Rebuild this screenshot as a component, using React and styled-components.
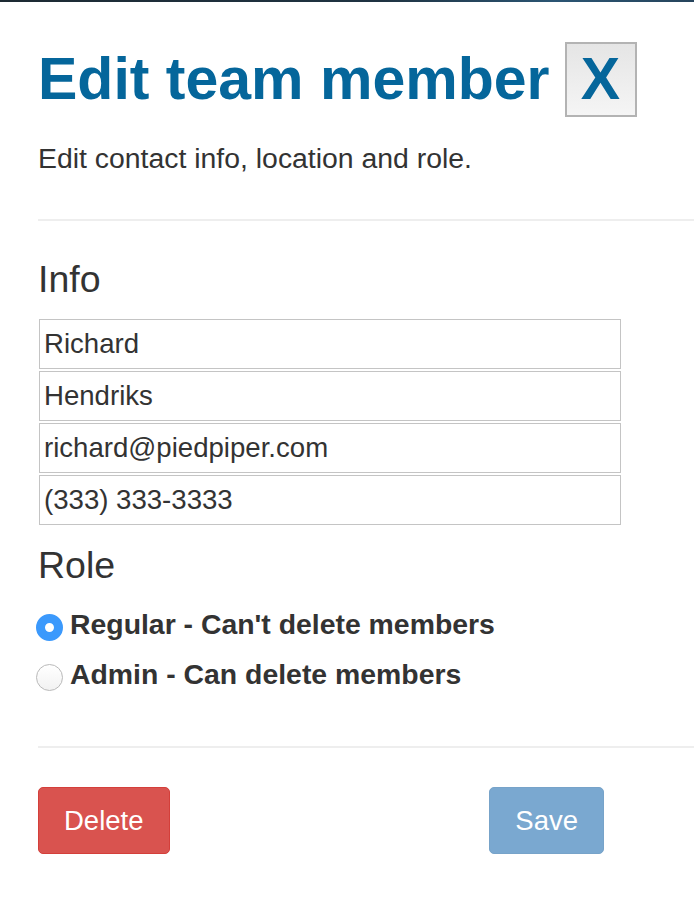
import React from "react";
import styled, { createGlobalStyle } from "styled-components";

const Global = createGlobalStyle`
  html, body { margin: 0; padding: 0; background: #fff; }
  body { font-family: "Liberation Sans", Arial, Helvetica, sans-serif; color: #333; }
  * { box-sizing: border-box; }
`;

const TopBar = styled.div`
  height: 2px;
  background: linear-gradient(to right, #1d2a33 0%, #1f3342 55%, #2b5573 80%, #26445c 100%);
`;

const Page = styled.div`
  padding: 40px 0 40px 38px;
  overflow: hidden;
`;

const Header = styled.div`
  display: flex;
  align-items: center;
  gap: 15px;
  height: 75px;
`;

const Title = styled.h1`
  margin: 0;
  font-size: 59px;
  line-height: 65px;
  font-weight: 700;
  color: #05669b;
`;

const CloseButton = styled.button`
  width: 72px;
  height: 75px;
  padding: 0;
  border: 2px solid #b3b3b3;
  border-radius: 0;
  background: linear-gradient(to bottom, #e5e5e5, #f5f5f5);
  color: #05669b;
  font-family: inherit;
  font-size: 59px;
  font-weight: 700;
  line-height: 1;
  display: flex;
  align-items: center;
  justify-content: center;
`;

const Subtitle = styled.p`
  margin: 21px 0 0;
  font-size: 28.4px;
  line-height: 40px;
`;

const Divider = styled.hr`
  margin: ${(p) => p.$top}px 0 0;
  border: 0;
  height: 2px;
  background: #eeeeee;
`;

const SectionTitle = styled.h3`
  margin: ${(p) => p.$top}px 0 0;
  font-size: 37.5px;
  line-height: 44px;
  font-weight: 500;
  color: #333;
`;

const Fields = styled.div`
  display: flex;
  flex-direction: column;
  gap: 2px;
  margin-top: 18px;
  margin-left: 1px;
  width: 582px;
`;

const TextInput = styled.input`
  height: 50px;
  width: 100%;
  border: 1px solid #c4c4c4;
  border-radius: 0;
  padding: 0 4px;
  font-family: inherit;
  font-size: 27.6px;
  color: #333;
  background: #fff;
  outline: none;
`;

const RadioGroup = styled.div`
  display: flex;
  flex-direction: column;
  gap: 10px;
  margin-top: 20px;
  margin-left: -2px;
`;

const RadioRow = styled.label`
  display: flex;
  align-items: center;
  height: 40px;
  gap: 7px;
`;

const RadioCircle = styled.input.attrs({ type: "radio" })`
  appearance: none;
  -webkit-appearance: none;
  margin: 0;
  width: 27px;
  height: 27px;
  border-radius: 50%;
  flex: none;
  border: 1px solid #b9b9b9;
  background: linear-gradient(to bottom, #ffffff, #f2f2f2);
  &:checked {
    border: 9.5px solid #3b99fc;
    background: #fff;
  }
`;

const RadioText = styled.span`
  font-size: 28.4px;
  font-weight: 700;
  color: #333;
  padding-bottom: 5px;
`;

const Footer = styled.div`
  display: flex;
  justify-content: space-between;
  align-items: center;
  width: 566px;
  margin-top: 39px;
`;

const Button = styled.button`
  height: 67px;
  padding: 0 25px;
  border-radius: 5px;
  border: 1px solid ${(p) => (p.$variant === "danger" ? "#d43f3a" : "#77a3c9")};
  background: ${(p) => (p.$variant === "danger" ? "#d9534f" : "#7aa8d0")};
  color: #fff;
  font-family: inherit;
  font-size: 27.5px;
  line-height: 1;
  cursor: pointer;
`;

export default function App() {
  return (
    <>
      <Global />
      <TopBar />
      <Page>
        <Header>
          <Title>Edit team member</Title>
          <CloseButton>X</CloseButton>
        </Header>
        <Subtitle>Edit contact info, location and role.</Subtitle>
        <Divider $top={41} />
        <SectionTitle $top={36}>Info</SectionTitle>
        <Fields>
          <TextInput defaultValue="Richard" />
          <TextInput defaultValue="Hendriks" />
          <TextInput defaultValue="richard@piedpiper.com" />
          <TextInput defaultValue="(333) 333-3333" />
        </Fields>
        <SectionTitle $top={18}>Role</SectionTitle>
        <RadioGroup>
          <RadioRow>
            <RadioCircle name="role" defaultChecked />
            <RadioText>Regular - Can't delete members</RadioText>
          </RadioRow>
          <RadioRow>
            <RadioCircle name="role" />
            <RadioText>Admin - Can delete members</RadioText>
          </RadioRow>
        </RadioGroup>
        <Divider $top={49} />
        <Footer>
          <Button $variant="danger">Delete</Button>
          <Button $variant="primary" disabled>Save</Button>
        </Footer>
      </Page>
    </>
  );
}
